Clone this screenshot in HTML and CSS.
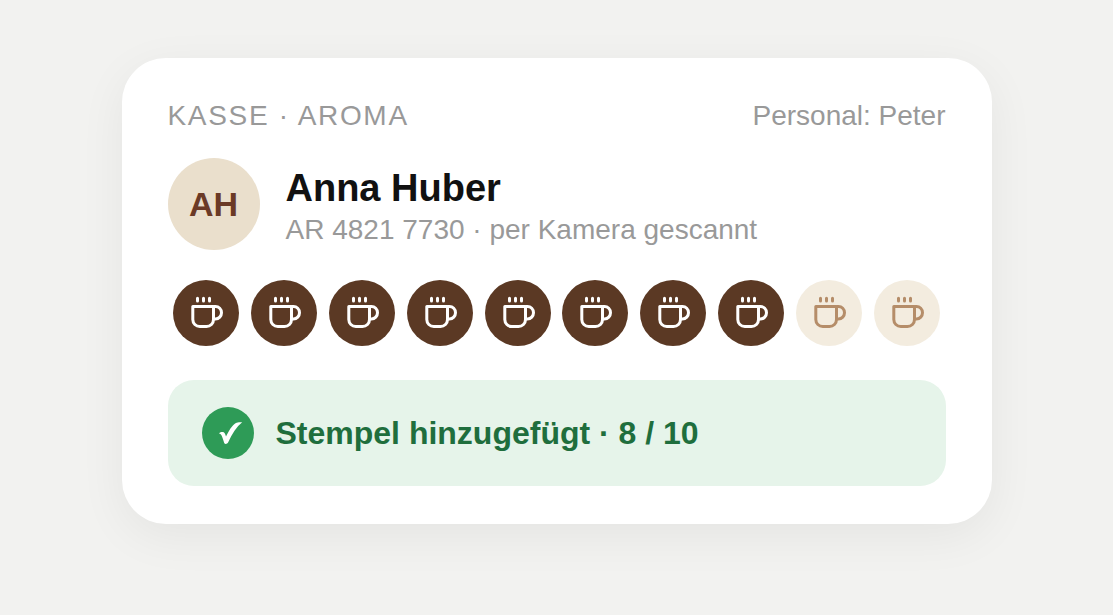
FILE: index.html
```html
<!doctype html>
<html lang="de">

<head>
  <meta charset="utf-8">
  <title>Kasse · Aroma</title>
  <meta name="viewport" content="width=device-width, initial-scale=1">

  <link rel="stylesheet" href="styles.css">
</head>

<body>
  <svg class="sprite" aria-hidden="true">
    <symbol id="cup" viewBox="0 0 36 36">
      <path d="M4.800 11.500h20.700v13a7 7 0 0 1-7 7h-6.700a7 7 0 0 1-7-7z" stroke-width="3" stroke-linejoin="round" />
      <path d="M25.500 11.500h2a6 6.200 0 0 1 0 12.400h-2" stroke-width="3" />
      <path d="M9.500 3.200v2.800M15.500 3.200v2.800M21.500 3.200v2.800" stroke-width="3" stroke-linecap="round" />
    </symbol>
  </svg>

  <main class="card">
    <header class="card-header">
      <span class="register">KASSE · AROMA</span>
      <span>Personal: Peter</span>
    </header>

    <section class="customer">
      <div class="avatar">AH</div>
      <div class="customer-text">
        <h1>Anna Huber</h1>
        <p>AR 4821 7730 · per Kamera gescannt</p>
      </div>
    </section>

    <ul class="stamps" aria-label="8 von 10 Stempeln">
      <li class="stamp"><svg><use href="#cup" /></svg></li>
      <li class="stamp"><svg><use href="#cup" /></svg></li>
      <li class="stamp"><svg><use href="#cup" /></svg></li>
      <li class="stamp"><svg><use href="#cup" /></svg></li>
      <li class="stamp"><svg><use href="#cup" /></svg></li>
      <li class="stamp"><svg><use href="#cup" /></svg></li>
      <li class="stamp"><svg><use href="#cup" /></svg></li>
      <li class="stamp"><svg><use href="#cup" /></svg></li>
      <li class="stamp empty"><svg><use href="#cup" /></svg></li>
      <li class="stamp empty"><svg><use href="#cup" /></svg></li>
    </ul>

    <div class="message" role="status">
      <span class="check">
        <svg viewBox="0 0 52 52" aria-hidden="true">
          <path d="M17 26.500c1.500-1.700 4.700-2 5.700-.3.600 1 .9 2 1.300 3.300 2.800-5.500 6-11 9.500-13.200 2-1.200 4.600-1.300 6.700-1-5.600 4.500-10.200 11.400-14 20-1 1.800-3.200 2.200-4 .7-.8-2.800-1.500-5-2.500-7.200-.5-1.200-1.400-1.900-2.700-2.300z" />
        </svg>
      </span>
      <span>Stempel hinzugefügt · 8 / 10</span>
    </div>
  </main>
</body>

</html>
```

FILE: styles.css
```css
* {
  box-sizing: border-box;
}

body {
  background: #f2f2f0;
  color: #999;
  font-family: "Liberation Sans", Helvetica, Arial, sans-serif;
  font-size: 28px;
  line-height: 32px;
  margin: 0;
  padding: 58px 20px;
}

.sprite {
  display: none;
}

.card {
  background: #fff;
  border-radius: 44px;
  box-shadow: 0 12px 48px rgba(0, 0, 0, 0.06);
  margin: 0 auto;
  max-width: 870px;
  padding: 42px 46px 38px;
}

.card-header {
  display: flex;
  justify-content: space-between;
  margin-bottom: 26px;
}

.register {
  letter-spacing: 0.06em;
}

.customer {
  display: flex;
  align-items: center;
  gap: 26px;
  margin-bottom: 30px;
}

.customer-text {
  padding-top: 4px;
}

.avatar {
  display: flex;
  flex: none;
  align-items: center;
  justify-content: center;
  width: 92px;
  height: 92px;
  border-radius: 50%;
  background: #eadfcc;
  color: #6b3a26;
  font-size: 34px;
  font-weight: 700;
}

h1 {
  color: #111;
  font-size: 38px;
  line-height: 44px;
  margin: 0;
}

.customer p {
  margin: 4px 0 0;
}

.stamps {
  display: grid;
  grid-template-columns: repeat(10, 1fr);
  justify-items: center;
  list-style: none;
  margin: 0 0 34px;
  padding: 0;
}

.stamp {
  display: flex;
  align-items: center;
  justify-content: center;
  width: 66px;
  height: 66px;
  border-radius: 50%;
  background: #5b3924;
  color: #fff;
}

.stamp svg {
  width: 36px;
  height: 36px;
  fill: none;
  stroke: currentColor;
}

.stamp.empty {
  background: #f3ecdf;
  color: #b58d69;
}

.message {
  display: flex;
  align-items: center;
  gap: 22px;
  padding: 27px 34px;
  border-radius: 26px;
  background: #e6f4ea;
  color: #1f6e3d;
  font-size: 32px;
  font-weight: 700;
}

.check {
  flex: none;
  width: 52px;
  height: 52px;
  border-radius: 50%;
  background: #2e9b57;
}

.check svg {
  display: block;
  fill: #fff;
}
```
